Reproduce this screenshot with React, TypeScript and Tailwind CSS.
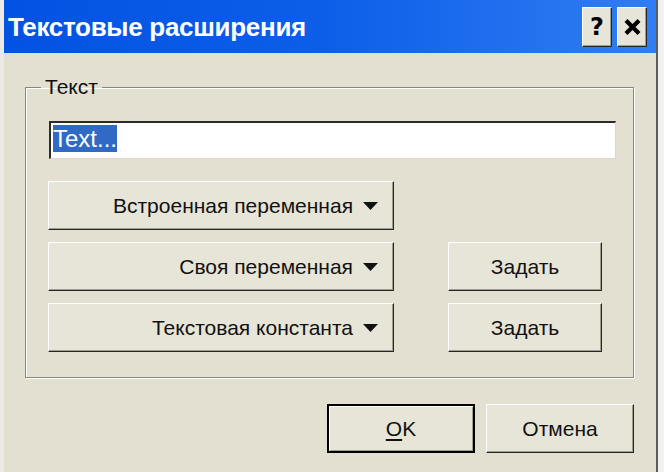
import React from "react";

function Arrow() {
  return (
    <svg width="15" height="8" viewBox="0 0 15 8" className="ml-[10px] shrink-0">
      <polygon points="0,0 15,0 7.5,8" fill="#111" />
    </svg>
  );
}

const raised =
  "border border-t-white border-l-white border-r-[#262626] border-b-[#262626] bg-[#e7e4d8] shadow-[inset_-1px_-1px_0_#a09d8f]";

function DropButton({ label }: { label: string }) {
  return (
    <button
      className={`${raised} h-[49px] w-[346px] flex items-center justify-end pr-[15px] text-[21px] text-[#111]`}
    >
      <span>{label}</span>
      <Arrow />
    </button>
  );
}

function SetButton() {
  return (
    <button className={`${raised} h-[49px] w-[154px] flex items-center justify-center text-[21px] text-[#111]`}>
      Задать
    </button>
  );
}

export default function App() {
  return (
    <div className="w-[664px] h-[472px] bg-[#f2f2f0] flex font-['Liberation_Sans',Arial,sans-serif]">
      <div className="w-[658px] h-full flex flex-col border-l-[4px] border-r-2 border-l-[#eceae2] border-r-[#5c5c5c] bg-[#e3e0d2]">
        {/* title bar */}
        <div className="h-[53px] shrink-0 flex items-center justify-between pl-[4px] pr-[9px] bg-gradient-to-r from-[#0452e2] via-[#0d5ee9] to-[#2f7ef3]">
          <span className="text-white text-[26px] font-bold tracking-[-0.3px] pt-[1px]">Текстовые расширения</span>
          <div className="flex gap-[5px]">
            <div className={`${raised} w-[30px] h-[40px] flex items-center justify-center`}>
              <span className="text-[24px] font-black text-black font-['DejaVu_Sans',sans-serif] leading-none">?</span>
            </div>
            <div className={`${raised} w-[30px] h-[40px] flex items-center justify-center`}>
              <svg width="17" height="16" viewBox="0 0 17 16">
                <path d="M2 1.5 L15 14.5 M15 1.5 L2 14.5" stroke="#000" strokeWidth="4.2" />
              </svg>
            </div>
          </div>
        </div>

        {/* body */}
        <div className="flex flex-col pl-[21px] pr-[22px]">
          <fieldset className="mt-[22px] border border-[#8a8777] shadow-[inset_1px_1px_0_#fff,1px_1px_0_#fff]">
            <legend className="ml-[15px] px-[4px] text-[21px] leading-[24px] text-[#111]">Текст</legend>
            <div className="pl-[22px] pr-[17px] pt-[22px] pb-[25px] flex flex-col">
              <div className="ml-px h-[38px] bg-white border-t-2 border-l-2 border-t-[#2b2b2b] border-l-[#2b2b2b] border-b border-r border-b-[#d9d7cc] border-r-[#d9d7cc] flex items-start pt-[2px] pl-[2px]">
                <span className="bg-[#316ac5] text-white text-[24px] leading-[27px]">Text...</span>
              </div>
              <div className="mt-[22px] flex flex-col gap-[12px]">
                <div className="flex">
                  <DropButton label="Встроенная переменная" />
                </div>
                <div className="flex gap-[54px]">
                  <DropButton label="Своя переменная" />
                  <SetButton />
                </div>
                <div className="flex gap-[54px]">
                  <DropButton label="Текстовая константа" />
                  <SetButton />
                </div>
              </div>
            </div>
          </fieldset>

          <div className="mt-[26px] flex justify-end gap-[11px]">
            <button className="w-[148px] h-[49px] border-2 border-black bg-[#e7e4d8] flex items-center justify-center text-[21px] text-[#111] shadow-[inset_1px_1px_0_#fff,inset_-1px_-1px_0_#a09d8f]">
              <span>
                <span className="underline underline-offset-[3px]">O</span>K
              </span>
            </button>
            <button className={`${raised} w-[148px] h-[49px] flex items-center justify-center text-[21px] text-[#111]`}>
              Отмена
            </button>
          </div>
        </div>
      </div>
    </div>
  );
}
